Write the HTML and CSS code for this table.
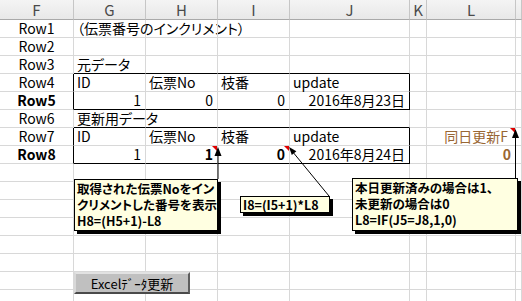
FILE: index.html
```html
<!DOCTYPE html>
<html lang="ja">
<head>
    <meta charset="UTF-8">
    <title>伝票番号のインクリメント</title>
    <link rel="stylesheet" href="styles.css">
</head>
<body>

<div class="sheet-wrap">
    <table class="sheet">
        <thead>
            <tr>
                <th class="c-f">F</th><th class="c-g">G</th><th class="c-h">H</th><th class="c-i">I</th>
                <th class="c-j">J</th><th class="c-k">K</th><th class="c-l">L</th><th class="c-m"></th>
            </tr>
        </thead>
        <tbody>
            <tr><td class="rn">Row1</td><td>（伝票番号のインクリメント）</td><td></td><td></td><td></td><td></td><td></td><td></td></tr>
            <tr><td class="rn">Row2</td><td></td><td></td><td></td><td></td><td></td><td></td><td></td></tr>
            <tr><td class="rn">Row3</td><td class="bb">元データ</td><td class="bb"></td><td class="bb"></td><td class="bb"></td><td></td><td></td><td></td></tr>
            <tr><td class="rn br">Row4</td><td>ID</td><td>伝票No</td><td>枝番</td><td class="br">update</td><td></td><td></td><td></td></tr>
            <tr><td class="rn br bold">Row5</td><td class="bb num">1</td><td class="bb num">0</td><td class="bb num">0</td><td class="bb br num">2016年8月23日</td><td></td><td></td><td></td></tr>
            <tr><td class="rn">Row6</td><td class="bb">更新用データ</td><td class="bb"></td><td class="bb"></td><td class="bb"></td><td></td><td></td><td></td></tr>
            <tr><td class="rn br">Row7</td><td>ID</td><td>伝票No</td><td>枝番</td><td class="br">update</td><td></td><td class="num brown has-note flag">同日更新F</td><td></td></tr>
            <tr><td class="rn br bold">Row8</td><td class="bb num">1</td><td class="bb num bold has-note">1</td><td class="bb num bold has-note">0</td><td class="bb br num">2016年8月24日</td><td></td><td class="num brown bold">0</td><td></td></tr>
            <tr><td></td><td></td><td></td><td></td><td></td><td></td><td></td><td></td></tr>
            <tr><td></td><td></td><td></td><td></td><td></td><td></td><td></td><td></td></tr>
            <tr><td></td><td></td><td></td><td></td><td></td><td></td><td></td><td></td></tr>
            <tr><td></td><td></td><td></td><td></td><td></td><td></td><td></td><td></td></tr>
            <tr><td></td><td></td><td></td><td></td><td></td><td></td><td></td><td></td></tr>
            <tr><td></td><td></td><td></td><td></td><td></td><td></td><td></td><td></td></tr>
            <tr><td></td><td></td><td></td><td></td><td></td><td></td><td></td><td></td></tr>
            <tr><td></td><td></td><td></td><td></td><td></td><td></td><td></td><td></td></tr>
        </tbody>
    </table>

    <!-- cell comments -->
    <div class="note note-h8">取得された伝票Noをイン<br>クリメントした番号を表示<br>H8=(H5+1)-L8</div>
    <div class="note note-i8">I8=(I5+1)*L8</div>
    <div class="note note-l8">本日更新済みの場合は1、<br>未更新の場合は0<br>L8=IF(J5=J8,1,0)</div>

    <svg class="arrows" width="522" height="301" viewBox="0 0 522 301">
        <line x1="218" y1="154" x2="218" y2="179" stroke="#000" stroke-width="1"/>
        <polygon points="218,147 214.5,156 221.5,156" fill="#000"/>

        <line x1="292" y1="151" x2="329" y2="196" stroke="#000" stroke-width="1"/>
        <polygon points="289,147 296.4,151.3 291.8,155.1" fill="#000"/>

        <line x1="515.5" y1="136" x2="515.5" y2="178" stroke="#000" stroke-width="1"/>
        <polygon points="515.5,129 512,138 519,138" fill="#000"/>
    </svg>

    <button class="form-btn">Excelﾃﾞｰﾀ更新</button>
</div>

</body>
</html>
```

FILE: styles.css
```css
body {
    margin: 0;
    background: #fff;
    font-family: "Noto Sans CJK JP", sans-serif;
}
.sheet-wrap {
    position: relative;
    width: 522px;
    height: 301px;
    overflow: hidden;
}
.sheet {
    table-layout: fixed;
    width: 522px;
    border-collapse: separate;
    border-spacing: 0;
    font-size: 14px;
    font-feature-settings: "palt";
    color: #000;
}
.sheet th {
    box-sizing: border-box;
    height: 20px;
    padding: 0;
    background: linear-gradient(#f4f4f4, #e8e8e8);
    border-right: 1px solid #c6c6c6;
    border-bottom: 1px solid #a9a9a9;
    font-weight: normal;
    font-size: 15px;
    line-height: 19px;
    color: #4a4a4a;
    text-align: center;
}
.c-f { width: 74px; }
.c-g { width: 72px; }
.c-h { width: 72px; }
.c-i { width: 72px; }
.c-j { width: 120px; }
.c-k { width: 17px; }
.c-l { width: 89px; }
.c-m { width: 6px; }

.sheet td {
    height: 17px;
    padding: 0 2px 0 3px;
    border-right: 1px solid #d8d8d8;
    border-bottom: 1px solid #d8d8d8;
    line-height: 17px;
    vertical-align: bottom;
    white-space: nowrap;
    overflow: visible;
    position: relative;
}
.sheet td.rn {
    text-align: center;
    padding: 0;
}
.sheet td.num {
    text-align: right;
    padding-right: 4px;
}
.sheet td.flag {
    padding-right: 7px;
}
.sheet td.bb {
    border-bottom-color: #000;
}
.sheet td.br {
    border-right-color: #000;
}
.bold {
    font-weight: bold;
}
.brown {
    color: #996633;
}

/* red corner mark on cells that carry a comment */
.has-note::after {
    content: "";
    position: absolute;
    top: 0;
    right: 0;
    border-top: 5px solid #e00000;
    border-left: 5px solid transparent;
}

.note {
    position: absolute;
    box-sizing: border-box;
    background: #ffffe1;
    border: 1px solid #000;
    box-shadow: 3px 3px 0 #000;
    padding: 1px 2px;
    font-size: 12.5px;
    font-weight: bold;
    line-height: 16px;
    font-feature-settings: "palt";
    white-space: nowrap;
}
.note-h8 {
    left: 74px;
    top: 179px;
    width: 144px;
    height: 52px;
}
.note-i8 {
    left: 240px;
    top: 196px;
    width: 90px;
    height: 17px;
    line-height: 15px;
    padding: 0 2px;
}
.note-l8 {
    left: 352px;
    top: 178px;
    width: 166px;
    height: 53px;
}

.arrows {
    position: absolute;
    left: 0;
    top: 0;
    pointer-events: none;
}

.form-btn {
    position: absolute;
    left: 74px;
    top: 272px;
    width: 116px;
    height: 22px;
    box-sizing: border-box;
    background: #c0c0c0;
    border: 2px solid;
    border-color: #e2e2e2 #5e5e5e #4a4a4a #d8d8d8;
    padding: 0;
    font-family: "Noto Sans CJK JP", sans-serif;
    font-size: 13px;
    color: #000;
}
```
